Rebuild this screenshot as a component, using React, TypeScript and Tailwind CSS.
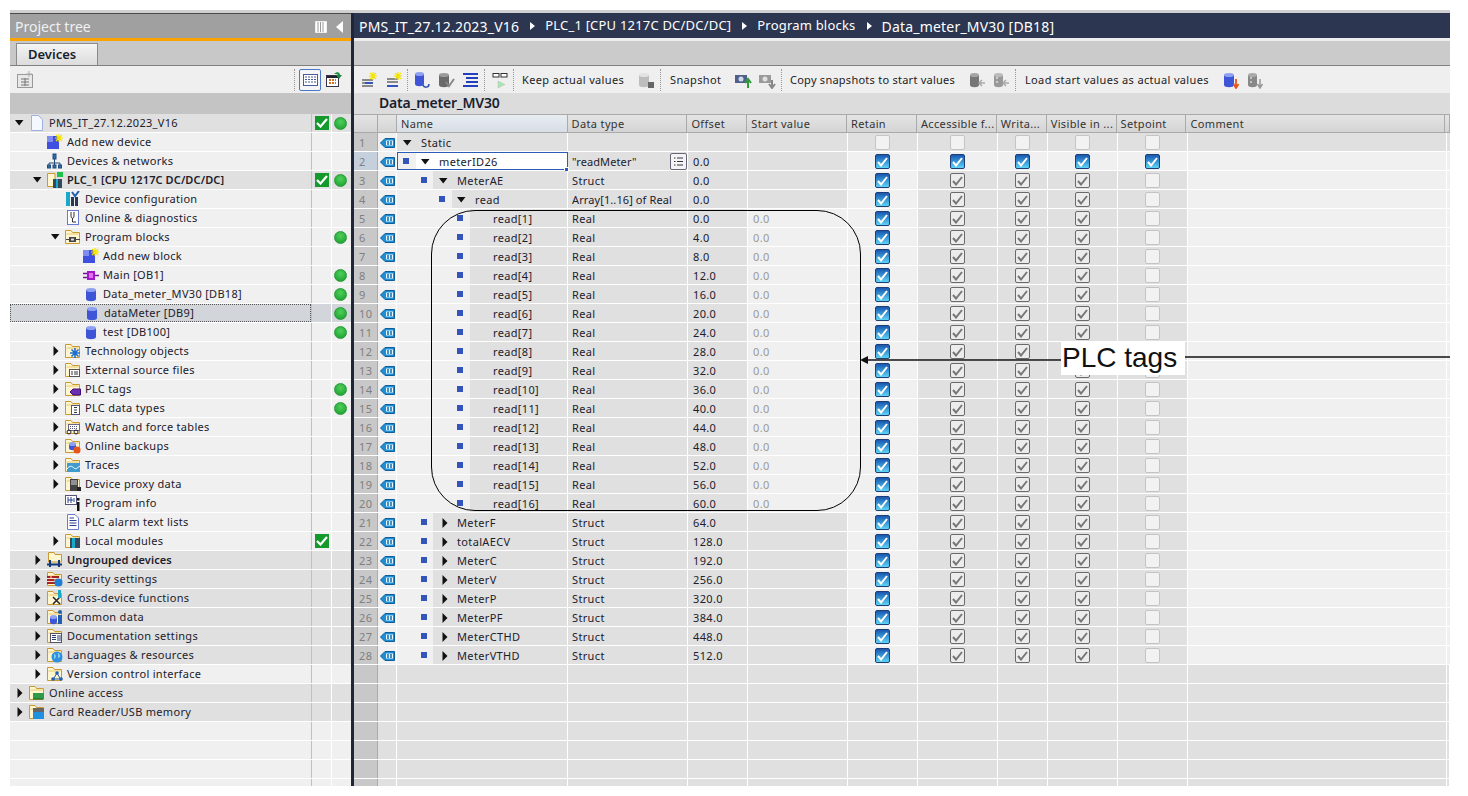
import React from 'react'

const Cyl = ({ x = 2, y = 2, w = 10, h = 12, c = '#3f55d8', t = '#8ea0f0' }: any) => (
  <g>
    <path d={`M${x} ${y + 2}V${y + h - 2}C${x} ${y + h + 1} ${x + w} ${y + h + 1} ${x + w} ${y + h - 2}V${y + 2}Z`} fill={c} />
    <ellipse cx={x + w / 2} cy={y + 2} rx={w / 2} ry={2} fill={t} />
  </g>
)

const Folder = () => (
  <g>
    <path d="M0.5 1.5H6L7.5 3.5H14.5V14.5H0.5Z" fill="#fff6d0" stroke="#c89a30" />
    <path d="M1.5 5H13.5" stroke="#e8c870" />
  </g>
)

const Star = ({ x = 12, y = 3, r = 3 }: any) => (
  <path d={`M${x} ${y - r - 1}V${y + r + 1}M${x - r - 1} ${y}H${x + r + 1}M${x - r} ${y - r}L${x + r} ${y + r}M${x - r} ${y + r}L${x + r} ${y - r}`} stroke="#f4e400" strokeWidth="1.200" />
)

const ICONS: Record<string, React.ReactNode> = {
  file: <path d="M2.5 0.5H9.5L13.5 4.5V15.5H2.5Z" fill="#f4f7ff" stroke="#9fb0dc" />,
  add: <g><rect x="0" y="2" width="12" height="13" fill="#3f4fe0" /><rect x="0" y="2" width="6" height="6" fill="#7f8cf0" /><Star x={12} y={4} /></g>,
  net: <g fill="none" stroke="#234a78"><path d="M7.5 6V10M2 13V10H13V13M7.5 10V13" /><rect x="6" y="1" width="3" height="5" fill="#2f6fae" /><rect x="0.5" y="12" width="3" height="3" fill="#2f6fae" /><rect x="6" y="12" width="3" height="3" fill="#2f6fae" /><rect x="11.5" y="12" width="3" height="3" fill="#2f6fae" /></g>,
  plc: <g><path d="M0.5 1.5H8V14.5H0.5Z" fill="#fff6d0" stroke="#c89a30" /><rect x="6" y="7" width="9" height="9" fill="#35495e" /><rect x="9" y="7" width="2" height="9" fill="#19a8c8" /><rect x="10" y="0" width="6" height="5" fill="#1fc24a" /></g>,
  config: <g><rect x="1" y="1" width="4" height="14" fill="#19a8c8" /><rect x="6" y="6" width="3" height="9" fill="#2a3a50" /><rect x="10" y="6" width="3" height="9" fill="#2a3a50" /><path d="M7 1L10 5L14 0" fill="none" stroke="#1f5fae" strokeWidth="2" /></g>,
  diag: <g><rect x="2.5" y="0.5" width="11" height="14" fill="#fff" stroke="#6a7bd0" /><path d="M6 2V6C6 9 9 9 9 6V2M7.5 8V12H11" fill="none" stroke="#333" /></g>,
  blocks: <g><Folder /><rect x="4" y="8" width="7" height="5" fill="#444" /><path d="M1 10.500H15" stroke="#444" /><rect x="6" y="9.500" width="3" height="2" fill="#ddd" /></g>,
  main: <g><rect x="4" y="4" width="8" height="9" fill="#a018c8" /><path d="M0 6.500H4M0 10.500H4M12 8.500H16" stroke="#7a1099" strokeWidth="1.500" /><rect x="6" y="6" width="4" height="5" fill="#e070f0" /></g>,
  db: <Cyl x={3} y={2} w={10} h={13} />,
  tech: <g><Folder /><path d="M10 5V15M5 10H15M6.500 6.500L13.500 13.500M6.500 13.500L13.500 6.500" stroke="#1f6fd0" strokeWidth="1.600" /></g>,
  ext: <g><Folder /><rect x="4.500" y="7.500" width="10" height="7" fill="#fff" stroke="#555" /><path d="M7 9V13M10 9V13M12 9V13" stroke="#333" /></g>,
  tags: <g><Folder /><path d="M5 11L8 8H15.500V14H8Z" fill="#6a30b0" stroke="#40107a" /></g>,
  types: <g><Folder /><rect x="6.500" y="5.500" width="8" height="9" fill="#fff" stroke="#557" /><path d="M9 7.500H12M9 10H12M9 12.500H12" stroke="#334" /></g>,
  watch: <g><Folder /><rect x="3.500" y="5.500" width="11" height="6" fill="#fff" stroke="#668" /><path d="M5 7.500H13M5 9.500H13" stroke="#557" strokeDasharray="1 1" /><circle cx="4" cy="13" r="2" fill="none" stroke="#223" /><circle cx="11" cy="13" r="2" fill="none" stroke="#223" /></g>,
  backup: <g><Folder /><Cyl x={4} y={4} w={7} h={8} /><circle cx="12" cy="12" r="3.500" fill="#e8541a" /></g>,
  traces: <g><Folder /><rect x="2" y="6" width="13" height="9" fill="#3f9ad0" /><path d="M2 12C5 8 7 9 9 11S13 10 15 9" fill="none" stroke="#fff" /></g>,
  proxy: <g><Folder /><rect x="5" y="3" width="8" height="12" fill="#444" /><path d="M7 4V9M9 4V9M11 4V9" stroke="#ddd" /><rect x="12" y="11" width="4" height="4" fill="#222" /></g>,
  info: <g><rect x="0.500" y="0.500" width="11" height="9" fill="#fff" stroke="#557" /><path d="M3 2V8M6 2V8M3 5H8M9 3V7" stroke="#2a3f90" /><rect x="12" y="7" width="2.500" height="9" fill="#111" /><rect x="12" y="3" width="2.500" height="2.500" fill="#111" /></g>,
  alarm: <g><path d="M2.500 0.500H10L13.500 4V15.500H2.500Z" fill="#fff" stroke="#6a7bd0" /><path d="M4.500 4H9M4.500 6.500H11.500M4.500 9H11.500M4.500 11.500H11.500" stroke="#2a3f90" /></g>,
  modules: <g><Folder /><rect x="5" y="5" width="10" height="10" fill="#35495e" /><rect x="7" y="5" width="3" height="10" fill="#19a8c8" /></g>,
  ungrouped: <g><path d="M1.500 0.500H7L8 2.500H14.500V10H1.500Z" fill="#fff6d0" stroke="#c89a30" /><path d="M0 12.500H15" stroke="#123a78" strokeWidth="2" /><path d="M3 8V15M12 8V15" stroke="#123a78" strokeWidth="2" /></g>,
  security: <g><Folder /><path d="M0 5H12V13H0Z" fill="#a82020" /><path d="M0 7.500H12M0 10.500H12M4 5V8M8 8V11" stroke="#f4e4d0" /><circle cx="11.500" cy="11.500" r="4" fill="#1f7fd8" /></g>,
  cross: <g><Folder /><path d="M6 7L13 14M13 7L6 14" stroke="#223" strokeWidth="1.500" /><rect x="11" y="0" width="3" height="8" fill="#19a8c8" /></g>,
  common: <g><Folder /><Cyl x={3} y={6} w={7} h={9} /><circle cx="13" cy="3" r="2" fill="#1f5fae" /><rect x="11" y="6" width="4" height="9" fill="#1f5fae" /></g>,
  doc: <g><Folder /><rect x="3.500" y="5.500" width="11" height="9" fill="#fff" stroke="#556" /><path d="M5 7.500H9M5 9.500H9M5 11.500H9M11 7V13M13 7V13" stroke="#2a3f70" /></g>,
  lang: <g><Folder /><circle cx="10" cy="10" r="5.500" fill="#2f8fe0" /><path d="M7 7C9 8 9 10 7 12M11 6L13 9L11 11" fill="#7fd0f0" stroke="#7fd0f0" /></g>,
  version: <g><Folder /><path d="M10 7L6.500 13H13.500Z" fill="none" stroke="#1f5fae" /><circle cx="10" cy="7" r="1.800" fill="#1f5fae" /><circle cx="6" cy="13" r="1.800" fill="#1f5fae" /><circle cx="14" cy="13" r="1.800" fill="#1f5fae" /></g>,
  online: <g><Folder /><rect x="4" y="8" width="11" height="6" fill="#2e9a4a" /><path d="M5 15V13M7 15V13M9 15V13M11 15V13M13 15V13" stroke="#0f6a2a" /></g>,
  card: <g><Folder /><rect x="4" y="4" width="11" height="4" fill="#666" /><rect x="4" y="8" width="11" height="7" fill="#1f8fe0" /></g>,
}

const TreeIcon = ({ name }: { name: string }) => (
  <svg width="16" height="16" viewBox="0 0 16 16" className="shrink-0">{ICONS[name]}</svg>
)

const TOOL_ICONS: Record<string, React.ReactNode> = {
  ins1: <g><path d="M1 8H12M1 11H12M1 14H12" stroke="#8a8a8a" strokeWidth="2" /><path d="M4 11H12" stroke="#3355bb" strokeWidth="2" /><Star x={12} y={4} /></g>,
  ins2: <g><path d="M1 7H12M1 10H12" stroke="#8a8a8a" strokeWidth="2" /><path d="M1 14H12" stroke="#3355bb" strokeWidth="2" /><Star x={12} y={4} /></g>,
  dbBack: <g><Cyl x={1} y={0} w={9} h={14} /><path d="M15 12C15 16 10 16 9 13" fill="none" stroke="#2a4fae" strokeWidth="1.500" /></g>,
  dbCheck: <g><Cyl x={1} y={1} w={10} h={14} c="#6a6a6a" t="#9a9a9a" /><path d="M8 10L11 14L16 7" fill="none" stroke="#888" strokeWidth="2" /></g>,
  lines: <path d="M1 2H16M4 6H16M4 10H16M1 14H16" stroke="#2440c0" strokeWidth="2" />,
  glasses: <g><rect x="1" y="1.500" width="6" height="3.500" fill="#fff" stroke="#333" /><rect x="9" y="1.500" width="6" height="3.500" fill="#fff" stroke="#333" /><path d="M6 9V16L13 12.500Z" fill="#a8e8b0" stroke="#bbb" strokeWidth="0.500" /></g>,
  dbLock: <g><Cyl x={1} y={1} w={10} h={14} c="#bdbdbd" t="#e2e2e2" /><rect x="10" y="10" width="6" height="6" fill="#666" /></g>,
  camUp: <g><rect x="0" y="3" width="12" height="8" fill="#50608a" /><circle cx="6" cy="7" r="2.500" fill="#cfd8ea" /><path d="M13 16V8M10 11L13 7L16 11" fill="none" stroke="#2e9a3a" strokeWidth="2" /></g>,
  camDown: <g><rect x="0" y="3" width="12" height="8" fill="#9a9a9a" /><circle cx="6" cy="7" r="2.500" fill="#e0e0e0" /><path d="M13 8V15M10 12L13 16L16 12" fill="none" stroke="#888" strokeWidth="2" /></g>,
  dbLeft: <g><Cyl x={1} y={1} w={9} h={14} c="#777" t="#a5a5a5" /><path d="M16 11H10M13 8L10 11L13 14" fill="none" stroke="#aaa" strokeWidth="1.500" /></g>,
  dbLeft2: <g><Cyl x={1} y={1} w={9} h={14} c="#999" t="#bbb" /><path d="M3 6H5M3 10H5" stroke="#fff" /><path d="M16 11H10M13 8L10 11L13 14" fill="none" stroke="#aaa" strokeWidth="1.500" /></g>,
  dbRed: <g><Cyl x={1} y={1} w={10} h={14} /><path d="M13 7V15M10.500 12L13 16L15.500 12" fill="none" stroke="#e8541a" strokeWidth="1.800" /></g>,
  dbGray: <g><Cyl x={1} y={1} w={9} h={14} c="#888" t="#aaa" /><path d="M3 6H5M3 10H5" stroke="#fff" /><path d="M13 7V15M10.500 12L13 16L15.500 12" fill="none" stroke="#999" strokeWidth="1.500" /></g>,
}

const ToolIcon = ({ name, className }: { name: string; className?: string }) => (
  <svg width="17" height="17" viewBox="0 0 17 17" className={className}>{TOOL_ICONS[name]}</svg>
)

const Sep = ({ className }: { className: string }) => (
  <div className={`h-[22px] border-l border-dotted border-[#999] ${className}`}></div>
)

const Down = () => <svg width="9" height="6" viewBox="0 0 9 6"><path d="M0 0H8.500L4.200 5.500Z" fill="#111" /></svg>
const Right = () => <svg width="6" height="10" viewBox="0 0 6 10"><path d="M0.500 0V10L5.500 5Z" fill="#111" /></svg>

const Check = () => (
  <div className="w-[14px] h-[14px] bg-[#149a2c] flex items-center justify-center">
    <svg width="12" height="10" viewBox="0 0 12 10"><path d="M1 5L4.500 8.500L11 1" fill="none" stroke="#fff" strokeWidth="2.200" /></svg>
  </div>
)

const Dot = () => (
  <div className="w-[13px] h-[13px] rounded-full bg-[radial-gradient(circle_at_50%_35%,#4fd05a,#169a2c)] border border-[#2a9a3a]"></div>
)

type TreeRow = { t: string; l: number; a?: 'd' | 'r'; i?: string; c?: boolean; o?: boolean; dark?: boolean; b?: boolean; sel?: boolean }

const TREE: TreeRow[] = [
  { t: 'PMS_IT_27.12.2023_V16', l: 0, a: 'd', i: 'file', c: true, o: true, dark: true },
  { t: 'Add new device', l: 1, i: 'add' },
  { t: 'Devices & networks', l: 1, i: 'net' },
  { t: 'PLC_1 [CPU 1217C DC/DC/DC]', l: 1, a: 'd', i: 'plc', c: true, o: true, dark: true, b: true },
  { t: 'Device configuration', l: 2, i: 'config' },
  { t: 'Online & diagnostics', l: 2, i: 'diag' },
  { t: 'Program blocks', l: 2, a: 'd', i: 'blocks', o: true },
  { t: 'Add new block', l: 3, i: 'add' },
  { t: 'Main [OB1]', l: 3, i: 'main', o: true },
  { t: 'Data_meter_MV30 [DB18]', l: 3, i: 'db', o: true },
  { t: 'dataMeter [DB9]', l: 3, i: 'db', o: true, sel: true },
  { t: 'test [DB100]', l: 3, i: 'db', o: true },
  { t: 'Technology objects', l: 2, a: 'r', i: 'tech' },
  { t: 'External source files', l: 2, a: 'r', i: 'ext' },
  { t: 'PLC tags', l: 2, a: 'r', i: 'tags', o: true },
  { t: 'PLC data types', l: 2, a: 'r', i: 'types', o: true },
  { t: 'Watch and force tables', l: 2, a: 'r', i: 'watch' },
  { t: 'Online backups', l: 2, a: 'r', i: 'backup' },
  { t: 'Traces', l: 2, a: 'r', i: 'traces' },
  { t: 'Device proxy data', l: 2, a: 'r', i: 'proxy' },
  { t: 'Program info', l: 2, i: 'info' },
  { t: 'PLC alarm text lists', l: 2, i: 'alarm' },
  { t: 'Local modules', l: 2, a: 'r', i: 'modules', c: true },
  { t: 'Ungrouped devices', l: 1, a: 'r', i: 'ungrouped', dark: true, b: true },
  { t: 'Security settings', l: 1, a: 'r', i: 'security', dark: true },
  { t: 'Cross-device functions', l: 1, a: 'r', i: 'cross', dark: true },
  { t: 'Common data', l: 1, a: 'r', i: 'common', dark: true },
  { t: 'Documentation settings', l: 1, a: 'r', i: 'doc', dark: true },
  { t: 'Languages & resources', l: 1, a: 'r', i: 'lang', dark: true },
  { t: 'Version control interface', l: 1, a: 'r', i: 'version' },
  { t: 'Online access', l: 0, a: 'r', i: 'online', dark: true },
  { t: 'Card Reader/USB memory', l: 0, a: 'r', i: 'card', dark: true },
  { t: '', l: 0 },
  { t: '', l: 0 },
  { t: '', l: 0 },
  { t: '', l: 0 },
]

const INDENT = ['pl-[5px]', 'pl-[23px]', 'pl-[41px]', 'pl-[59px]']

const ProjectTree = () => {
  return (
    <div className="w-[341px] flex flex-col shrink-0">
      <div className="h-[25px] bg-[#a0a0a0] border-t border-[#4a4a4a] flex items-center pl-[5px] pt-[1px] text-[14px] text-[#f0f0f0]">
        <span className="grow">Project tree</span>
        <svg width="12" height="12" viewBox="0 0 12 12" className="mr-[9px]"><path d="M0.500 0.500H11.500V11.500H0.500Z" fill="#fff" stroke="#eee" /><path d="M3 1V11M5.500 1V11M8 1V11" stroke="#999" /></svg>
        <svg width="7" height="12" viewBox="0 0 7 12" className="mr-[8px]"><path d="M7 0V12L0 6Z" fill="#fff" /></svg>
      </div>
      <div className="h-[3px] bg-[#f9a300]"></div>
      <div className="h-[25px] bg-[#c8c8c8] border-b border-[#808080] flex items-end pl-[6px]">
        <div className="w-[82px] h-[22px] bg-gradient-to-b from-[#f4f4f4] to-[#dcdcdc] border border-b-0 border-[#8a8a8a] flex items-center pl-[11px] text-[13px] font-semibold text-[#1a1f30]">Devices</div>
      </div>
      <div className="h-[27px] bg-[#efefef] flex items-center pl-[7px]">
        <svg width="17" height="17" viewBox="0 0 17 17"><rect x="0.500" y="3.500" width="15" height="13" fill="#e8e8e8" stroke="#999" /><path d="M4 8H12M4 11H12M4 14H12M8 7V15" stroke="#777" /><path d="M12 0V6M9 3H15" stroke="#aaa" /></svg>
        <Sep className="ml-[260px]" />
        <div className="ml-[4px] w-[22px] h-[22px] border border-[#4a78c8] rounded-[2px] bg-[#f6f6f6] flex items-center justify-center">
          <svg width="15" height="12" viewBox="0 0 15 12"><rect x="0.500" y="0.500" width="14" height="11" fill="#fff" stroke="#4a5a9a" /><path d="M2 3H13M2 5.500H13M2 8H13" stroke="#4a5a9a" strokeDasharray="2 1" /></svg>
        </div>
        <svg width="17" height="17" viewBox="0 0 17 17" className="ml-[5px]"><rect x="0.500" y="4.500" width="12" height="11" fill="#fff" stroke="#334" /><rect x="1" y="5" width="11" height="2" fill="#223" /><path d="M3 9H10M3 12H10" stroke="#d07020" strokeWidth="2" strokeDasharray="2 1" /><path d="M8 3C11 0 14 1 14 4H16L13 8L10 4H12C12 3 10 3 8 3Z" fill="#1c8a3a" /></svg>
      </div>
      <div className="h-[21px] bg-[#c4c4c4]"></div>
      <div className="flex-1 overflow-hidden">
        {TREE.map((r, n) => (
          <div key={n} className={`h-[19px] flex border-b border-white ${r.sel ? 'bg-[#d2d6da]' : r.dark ? 'bg-[#e0e0e0]' : 'bg-[#f0f0f0]'}`}>
            <div className={`w-[301px] flex items-center ${INDENT[r.l]} ${r.sel ? 'border border-dotted border-[#555]' : ''}`}>
              <div className="w-[14px] shrink-0 flex items-center">
                {r.a === 'd' && <Down />}
                {r.a === 'r' && <div className="ml-[2px] flex"><Right /></div>}
              </div>
              {r.i && <TreeIcon name={r.i} />}
              <span className={`ml-[4px] whitespace-nowrap text-[11px] text-[#20202c] ${r.b ? 'font-semibold tracking-[0.1px]' : 'tracking-[0.3px]'}`}>{r.t}</span>
            </div>
            <div className="w-[1px] bg-[#c0c0c0]"></div>
            <div className="w-[20px] flex items-center justify-center border-r border-white pl-[1px]">{r.c && <Check />}</div>
            <div className="w-[19px] flex items-center justify-center pr-[2px]">{r.o && <Dot />}</div>
          </div>
        ))}
      </div>
    </div>
  )
}

const Toolbar = () => {
  return (
    <div className="h-[27px] bg-[#efefef] flex items-center pl-[7px] pt-[1px] text-[11px] tracking-[0.35px] text-[#222]">
      <ToolIcon name="ins1" />
      <ToolIcon name="ins2" className="ml-[8px]" />
      <Sep className="ml-[4px]" />
      <ToolIcon name="dbBack" className="ml-[6px]" />
      <ToolIcon name="dbCheck" className="ml-[7px]" />
      <ToolIcon name="lines" className="ml-[7px]" />
      <Sep className="ml-[5px]" />
      <ToolIcon name="glasses" className="ml-[7px]" />
      <Sep className="ml-[4px]" />
      <span className="ml-[8px] w-[104px] whitespace-nowrap">Keep actual values</span>
      <ToolIcon name="dbLock" className="ml-[12px]" />
      <Sep className="ml-[5px]" />
      <span className="ml-[9px] w-[53px] whitespace-nowrap">Snapshot</span>
      <ToolIcon name="camUp" className="ml-[12px]" />
      <ToolIcon name="camDown" className="ml-[7px]" />
      <Sep className="ml-[5px]" />
      <span className="ml-[8px] w-[167px] whitespace-nowrap tracking-[0.25px]">Copy snapshots to start values</span>
      <ToolIcon name="dbLeft" className="ml-[12px]" />
      <ToolIcon name="dbLeft2" className="ml-[7px]" />
      <Sep className="ml-[5px]" />
      <span className="ml-[9px] w-[186px] whitespace-nowrap">Load start values as actual values</span>
      <ToolIcon name="dbRed" className="ml-[12px]" />
      <ToolIcon name="dbGray" className="ml-[7px]" />
    </div>
  )
}

const COLS = ['w-[24px]', 'w-[19px]', 'w-[171px]', 'w-[120px]', 'w-[60px]', 'w-[100px]', 'w-[70px]', 'w-[80px]', 'w-[50px]', 'w-[70px]', 'w-[70px]', 'w-[259px]', 'w-[3px]']
const HEAD = ['', '', 'Name', 'Data type', 'Offset', 'Start value', 'Retain', 'Accessible f...', 'Writa...', 'Visible in ...', 'Setpoint', 'Comment', '']

const TagIcon = () => (
  <svg width="15" height="10" viewBox="0 0 15 10"><path d="M0.500 5L5 0.500H14.500V9.500H5Z" fill="#1c8fd6" stroke="#0f5f9a" /><rect x="6" y="2.500" width="7" height="5" fill="#eaf6ff" /><path d="M8 3V7M11 3V7" stroke="#0f6fb0" strokeWidth="1.500" /></svg>
)

const Box = ({ kind }: { kind: 'empty' | 'blue' | 'gray' }) => {
  if (kind === 'blue')
    return (
      <div className="w-[15px] h-[15px] rounded-[2px] border border-[#1c3f78] bg-gradient-to-b from-[#1b57b0] to-[#5fd4f6] flex items-center justify-center">
        <svg width="11" height="10" viewBox="0 0 11 10"><path d="M1 5L4 8.500L10 1" fill="none" stroke="#fff" strokeWidth="2" /></svg>
      </div>
    )
  if (kind === 'gray')
    return (
      <div className="w-[15px] h-[15px] rounded-[2px] border border-[#6a6a6a] bg-[#ececec] flex items-center justify-center">
        <svg width="11" height="10" viewBox="0 0 11 10"><path d="M1 5L4 8.500L10 1" fill="none" stroke="#777" strokeWidth="2" /></svg>
      </div>
    )
  return <div className="w-[15px] h-[15px] rounded-[2px] border border-[#c4c4c4] bg-[#f2f2f2]"></div>
}

type Row = { name: string; lv: number; a?: 'd' | 'r'; type: string; off: string; start?: string }

const OFFS = ['0.0', '4.0', '8.0', '12.0', '16.0', '20.0', '24.0', '28.0', '32.0', '36.0', '40.0', '44.0', '48.0', '52.0', '56.0', '60.0']

const ROWS: Row[] = [
  { name: 'Static', lv: 0, a: 'd', type: '', off: '' },
  { name: 'meterID26', lv: 1, a: 'd', type: '"readMeter"', off: '0.0' },
  { name: 'MeterAE', lv: 2, a: 'd', type: 'Struct', off: '0.0' },
  { name: 'read', lv: 3, a: 'd', type: 'Array[1..16] of Real', off: '0.0' },
  ...OFFS.map((o, i) => ({ name: `read[${i + 1}]`, lv: 4, type: 'Real', off: o, start: '0.0' })),
  { name: 'MeterF', lv: 2, a: 'r', type: 'Struct', off: '64.0' },
  { name: 'totalAECV', lv: 2, a: 'r', type: 'Struct', off: '128.0' },
  { name: 'MeterC', lv: 2, a: 'r', type: 'Struct', off: '192.0' },
  { name: 'MeterV', lv: 2, a: 'r', type: 'Struct', off: '256.0' },
  { name: 'MeterP', lv: 2, a: 'r', type: 'Struct', off: '320.0' },
  { name: 'MeterPF', lv: 2, a: 'r', type: 'Struct', off: '384.0' },
  { name: 'MeterCTHD', lv: 2, a: 'r', type: 'Struct', off: '448.0' },
  { name: 'MeterVTHD', lv: 2, a: 'r', type: 'Struct', off: '512.0' },
]

const NAME_INDENT = ['', 'w-[19px] pl-[6px]', 'w-[36px] pl-[24px]', 'w-[55px] pl-[42px]', 'w-[73px] pl-[60px]']
const NAME_PAD = ['pl-[6px]', 'pl-[5px]', 'pl-[6px]', 'pl-[5px]', 'pl-[23px]']

const NameCell = ({ r, selected }: { r: Row; selected: boolean }) => (
  <div className={`w-[171px] h-full flex border-r border-white relative ${selected ? 'outline outline-1 -outline-offset-1 outline-[#2a5cb8] bg-white' : 'bg-[#e0e0e0]'}`}>
    {r.lv > 0 && (
      <div className={`${NAME_INDENT[r.lv]} h-full flex items-center bg-[#f0f0f0] shrink-0`}>
        <div className="w-[6px] h-[6px] bg-[#3355bb]"></div>
      </div>
    )}
    <div className={`flex items-center grow pt-[2px] ${NAME_PAD[r.lv]}`}>
      {r.a && (
        <div className="w-[18px] shrink-0 flex items-center">
          {r.a === 'd' ? <Down /> : <div className="ml-[3px] flex"><Right /></div>}
        </div>
      )}
      <span>{r.name}</span>
    </div>
    {selected && <div className="absolute right-[-2px] bottom-[-2px] w-[5px] h-[5px] bg-[#2a5cb8] border border-white"></div>}
  </div>
)

const DataRow = ({ r, n }: { r: Row; n: number }) => {
  const first = n === 1
  const second = n === 2
  const soft = first ? 'bg-[#e0e0e0]' : 'bg-[#f0f0f0]'
  const flag = second ? 'bg-[#f0f0f0]' : 'bg-[#e0e0e0]'
  const other = first ? 'empty' : second ? 'blue' : 'gray'
  return (
    <div className="h-[19px] flex border-b border-white text-[11px] tracking-[0.35px] text-[#20202c]">
      <div className={`w-[24px] h-full flex items-center pl-[5px] pt-[2px] border-r border-[#aaa] text-[#808080] ${second ? 'bg-[#c5d0dc]' : 'bg-[#c8c8c8]'}`}>{n}</div>
      <div className="w-[19px] h-full flex items-center justify-center pt-[2px] bg-[#f0f0f0] border-r border-white"><TagIcon /></div>
      <NameCell r={r} selected={second} />
      <div className={`w-[120px] h-full flex items-center justify-between pl-[4px] bg-[#e0e0e0] border-r border-white whitespace-nowrap ${r.type.length > 6 ? 'tracking-[0.1px]' : ''}`}>
        <span className="pt-[2px]">{r.type}</span>
        {second && (
          <div className="w-[17px] h-[17px] rounded-[2px] border border-[#667] bg-[#f4f4f4] flex items-center justify-center">
            <svg width="9" height="9" viewBox="0 0 9 9"><path d="M0 1H1.500M3 1H9M0 4.500H1.500M3 4.500H9M0 8H1.500M3 8H9" stroke="#334" /></svg>
          </div>
        )}
      </div>
      <div className="w-[60px] h-full flex items-center pl-[5px] pt-[2px] bg-[#e0e0e0] border-r border-white">{r.off}</div>
      <div className={`w-[100px] h-full flex items-center pl-[5px] pt-[2px] border-r border-white text-[#999] ${r.start ? 'bg-[#f0f0f0]' : 'bg-[#e0e0e0]'}`}>{r.start}</div>
      <div className={`w-[70px] h-full flex items-center justify-center pt-[1px] border-r border-white ${soft}`}><Box kind={first ? 'empty' : 'blue'} /></div>
      <div className={`w-[80px] h-full flex items-center justify-center pt-[1px] border-r border-white ${flag}`}><Box kind={other} /></div>
      <div className={`w-[50px] h-full flex items-center justify-center pt-[1px] border-r border-white ${flag}`}><Box kind={other} /></div>
      <div className={`w-[70px] h-full flex items-center justify-center pt-[1px] border-r border-white ${flag}`}><Box kind={other} /></div>
      <div className={`w-[70px] h-full flex items-center justify-center pt-[1px] border-r border-white ${flag}`}><Box kind={second ? 'blue' : 'empty'} /></div>
      <div className={`w-[259px] h-full border-r border-white ${soft}`}></div>
      <div className={`w-[3px] h-full ${soft}`}></div>
    </div>
  )
}

const BlankRow = () => (
  <div className="h-[19px] flex border-b border-white">
    {COLS.map((c, i) => (
      <div key={i} className={`${c} h-full ${i === 0 ? 'bg-[#c8c8c8] border-r border-[#aaa]' : 'bg-[#e0e0e0] border-r border-white'}`}></div>
    ))}
  </div>
)

const CrumbArrow = () => <svg width="5" height="8" viewBox="0 0 5 8" className="ml-[11px] mr-[10px]"><path d="M0 0V8L5 4Z" fill="#fff" /></svg>

const Editor = () => {
  return (
    <div className="w-[1096px] flex flex-col shrink-0">
      <div className="h-[25px] bg-[#2d3650] flex items-center pl-[5px] pt-[1px] text-white tracking-[0.2px] whitespace-nowrap">
        <span className="text-[14px]">PMS_IT_27.12.2023_V16</span>
        <CrumbArrow />
        <span className="text-[13px]">PLC_1 [CPU 1217C DC/DC/DC]</span>
        <CrumbArrow />
        <span className="text-[13px]">Program blocks</span>
        <CrumbArrow />
        <span className="text-[14px]">Data_meter_MV30 [DB18]</span>
      </div>
      <div className="h-[3px] bg-[#eeeeee]"></div>
      <div className="h-[25px] bg-[#cbcbcb] border-b border-[#808080]"></div>
      <Toolbar />
      <div className="h-[21px] bg-[#dcdcdc] flex items-center pl-[25px] pb-[2px] text-[14px] tracking-[-0.2px] font-semibold text-[#1a1f30]">Data_meter_MV30</div>
      <div className="h-[19px] flex border-y border-[#aaa] text-[11px] tracking-[0.35px] text-[#333]">
        {COLS.map((c, i) => (
          <div key={i} className={`${c} h-full flex items-center pl-[4px] pt-[2px] border-r border-[#aaa] whitespace-nowrap bg-gradient-to-b ${i === 2 ? 'from-[#e8edf2] to-[#d8dee6]' : 'from-[#e4e4e4] to-[#d4d4d4]'}`}>{HEAD[i]}</div>
        ))}
      </div>
      <div className="flex-1 overflow-hidden">
        {ROWS.map((r, i) => <DataRow key={i} r={r} n={i + 1} />)}
        {[0, 1, 2, 3, 4, 5, 6].map((i) => <BlankRow key={i} />)}
      </div>
    </div>
  )
}

const App = () => {
  return (
    <div className="relative w-[1468px] h-[796px] bg-white overflow-hidden pt-[10px] pl-[10px] font-['Noto_Sans',sans-serif]">
      <div className="w-[1440px] h-[776px] flex flex-col">
        <div className="h-[3px] bg-[#d0d0d0] shrink-0"></div>
        <div className="flex flex-1 min-h-0">
          <ProjectTree />
          <div className="w-[3px] bg-[#1f2638] shrink-0"></div>
          <Editor />
        </div>
      </div>

      {/* annotation drawn on top of the table */}
      <div className="absolute left-[431px] top-[210px] w-[430px] h-[301px] rounded-[44px] border-[1.5px] border-black"></div>
      <svg width="1468" height="796" viewBox="0 0 1468 796" className="absolute left-0 top-0">
        <path d="M866 360H1062M1184 357H1450" stroke="#111" strokeWidth="1.500" />
        <path d="M860 360L868 356V364Z" fill="#111" />
      </svg>
      <div className="absolute left-[1061px] top-[341px] w-[124px] h-[34px] bg-white flex items-center pl-[1px] font-['Liberation_Sans',sans-serif] text-[28px] leading-none text-[#111] whitespace-nowrap">PLC tags</div>
    </div>
  )
}

export default App
